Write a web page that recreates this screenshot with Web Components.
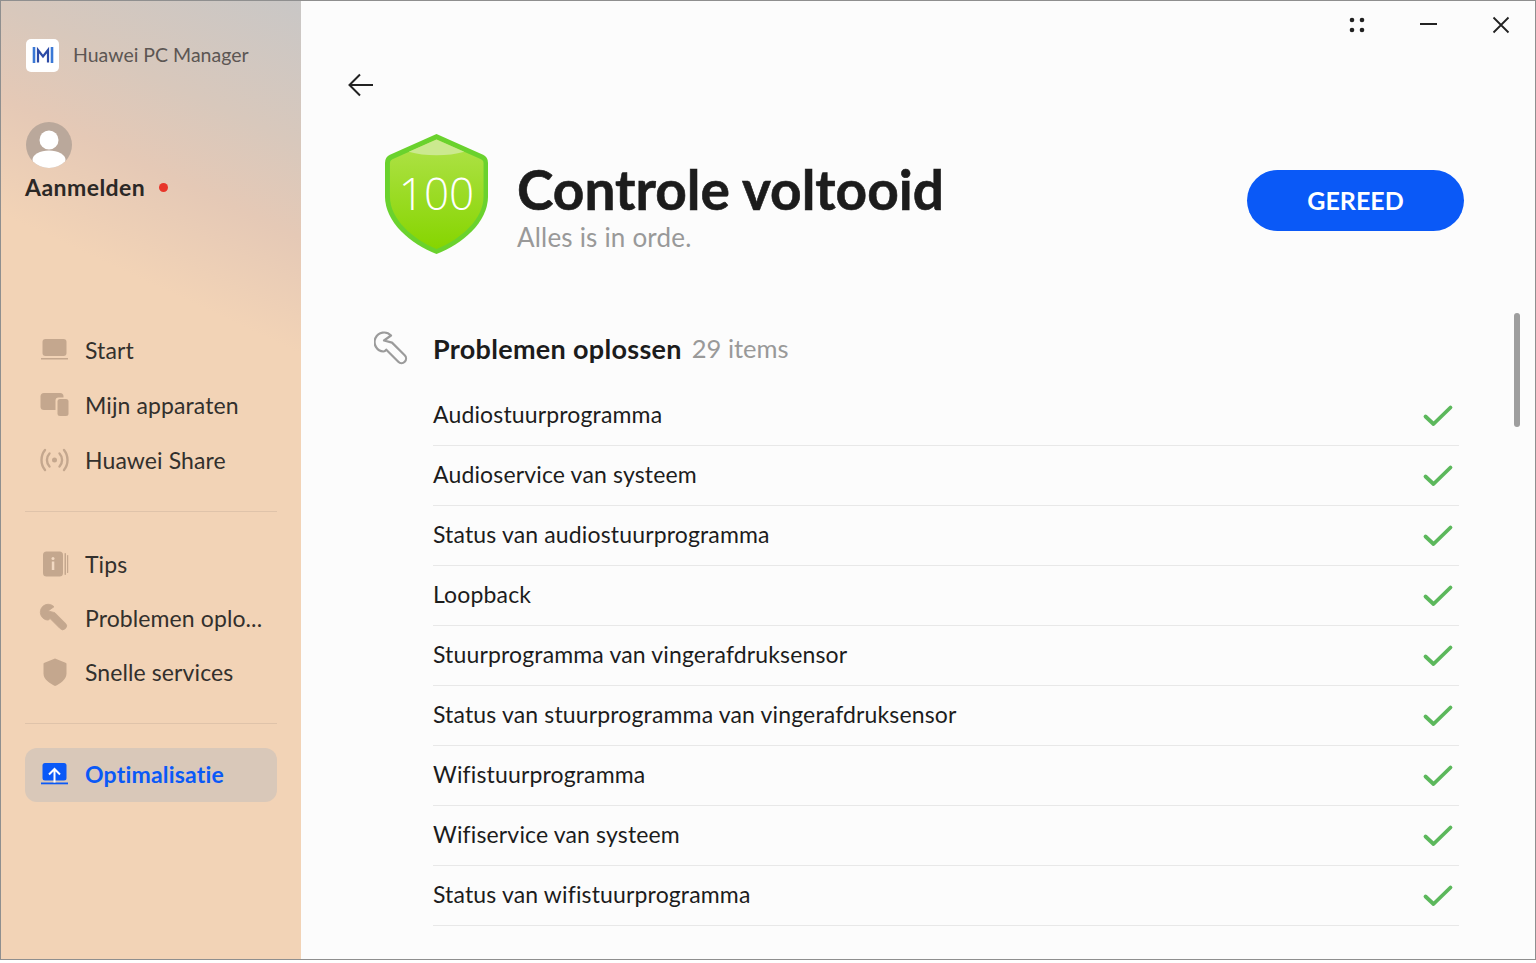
<!DOCTYPE html>
<html lang="nl">
<head>
<meta charset="utf-8">
<title>Huawei PC Manager</title>
<style>
html, body { margin: 0; padding: 0; background: #fff; }
body { font-family: Lato, "Noto Sans", sans-serif; height: 963px; overflow: hidden; }
</style>
</head>
<body>
<app-window></app-window>

<script>
const WRENCH = 'M17 4.500A9.500 9.500 0 1 0 9.500 20.500Q11 20.500 12.300 18.700L24.300 30.700A4.500 4.500 0 0 0 30.700 24.300L18 11.600 10 9.500z';

const ICONS = {
    start: `<svg width="30" height="26" viewBox="0 0 30 26"><rect x="3.500" y="2" width="24" height="17" rx="3" fill="#c4a78e"/><rect x="2" y="21" width="27" height="1.500" fill="#c4a78e"/></svg>`,
    devices: `<svg width="30" height="26" viewBox="0 0 30 26"><rect x="1.500" y="1" width="23" height="17" rx="3.500" fill="#c4a78e"/><rect x="16.500" y="5.500" width="13" height="19" rx="3" fill="#f2d3b5"/><rect x="18.500" y="7" width="11" height="17" rx="2.500" fill="#c4a78e"/></svg>`,
    share: `<svg width="30" height="26" viewBox="0 0 30 26" fill="none" stroke="#c4a78e" stroke-width="2.400" stroke-linecap="round"><circle cx="15.500" cy="13" r="2.500" fill="#c4a78e" stroke="none"/><path d="M10.500 6.500a9.500 9.500 0 0 0 0 13M20.500 6.500a9.500 9.500 0 0 1 0 13"/><path d="M6 3a16 16 0 0 0 0 20M25 3a16 16 0 0 1 0 20"/></svg>`,
    tips: `<svg width="30" height="28" viewBox="0 0 30 28"><rect x="4" y="1.500" width="20" height="25" rx="3.500" fill="#c4a78e"/><rect x="25.500" y="3" width="1.500" height="22" rx=".7" fill="#c4a78e"/><rect x="28" y="5" width="1.200" height="18" rx=".6" fill="#c4a78e"/><circle cx="14" cy="8.500" r="1.500" fill="#f2d9c2"/><rect x="12.800" y="11.500" width="2.500" height="8.500" fill="#f2d9c2"/></svg>`,
    wrench: `<svg width="30" height="30" viewBox="-1 0 36 36"><path d="${WRENCH}" fill="#c4a78e" stroke="#c4a78e" stroke-width="1" stroke-linejoin="round"/></svg>`,
    shield: `<svg width="30" height="30" viewBox="0 0 30 30"><path d="M16 1.500l10.500 4.200c.8.300 1 .8 1 1.600v9.200c0 6-6.500 10.500-11.500 12.500C11 26.500 4.500 22.500 4.500 16.500V7.300c0-.8.200-1.300 1-1.600z" fill="#c4a78e"/></svg>`,
    optimize: `<svg width="30" height="26" viewBox="0 0 30 26"><rect x="3.500" y="1" width="24" height="17.500" rx="2.500" fill="#0a59f7"/><rect x="2" y="20.500" width="27" height="1.800" fill="#0a59f7"/><path d="M15.500 20.500V7.500M10 12.500L15.500 7l5.500 5.500" fill="none" stroke="#fff" stroke-width="2"/></svg>`
};

class NavItem extends HTMLElement {
    constructor() {
        super();
        this.attachShadow({ mode: 'open' });
        this.shadowRoot.innerHTML = `
            <style>
                :host { display: flex; align-items: center; height: var(--h, 55px); border-radius: 12px; font-size: 23px; letter-spacing: .1px; color: #33302d; white-space: nowrap; }
                :host([active]) { background: #d9c8b9; color: #0a59f7; font-weight: 700; letter-spacing: .2px; }
                :host([active]) slot { display: block; padding-bottom: 2px; }
                .icon { width: 30px; height: 30px; margin: 0 16px 0 14px; display: flex; align-items: center; justify-content: center; flex: none; }
            </style>
            <span class="icon">${ICONS[this.getAttribute('icon')]}</span><slot></slot>
        `;
    }
}
customElements.define('nav-item', NavItem);

class SideBar extends HTMLElement {
    constructor() {
        super();
        this.attachShadow({ mode: 'open' });
        this.shadowRoot.innerHTML = `
            <style>
                :host {
                    display: flex; flex-direction: column; flex: none; width: 300px; box-sizing: border-box; padding: 37px 24px 0 24px;
                    background: linear-gradient(205deg, #c9c7c6 0, #d8c8bc 130px, #e5c9b6 215px, #f2d3b6 320px, #f2d3b6 100%);
                }
                .brand { display: flex; align-items: center; height: 34px; font-size: 19.500px; color: #5c5653; }
                .brand slot { display: block; padding-bottom: 2px; }
                .logo { width: 33px; height: 33px; border-radius: 5px; background: #fff; margin: 0 14px 0 1px; display: flex; align-items: center; justify-content: center; }
                .avatar { width: 46px; height: 46px; margin: 50px 0 0 1px; }
                .login { display: flex; align-items: center; height: 30px; margin-top: 4px; font-size: 23px; font-weight: 700; letter-spacing: .45px; color: #2b2826; }
                .dot { width: 9px; height: 9px; border-radius: 50%; background: #e8352a; margin-left: 14px; }
                .first { margin-top: 120px; }
                hr { border: 0; border-top: 1px solid #dfc3aa; margin: 0 0; height: 0; align-self: stretch; }
                .g1 { margin-bottom: 24px; }
                .g2 { --h: 54px; margin-bottom: 24px; }
                .g2 + hr { margin-bottom: 24px; }
                .g1 + hr { margin-bottom: 25px; }
                .last { --h: 54px; }
            </style>
            <div class="brand">
                <span class="logo">
                    <svg width="22" height="18" viewBox="0 0 22 18" fill="none">
                        <path d="M2 1v16" stroke="#3a78d6" stroke-width="2.600"/>
                        <path d="M6 16.500V4l5 6.500L16 4v12.500" stroke="#2c4aa6" stroke-width="2.200"/>
                        <path d="M20 1v16" stroke="#3a78d6" stroke-width="2.600"/>
                    </svg>
                </span>
                <slot name="title"></slot>
            </div>
            <svg class="avatar" viewBox="0 0 46 46">
                <defs><clipPath id="av"><circle cx="23" cy="23" r="23"/></clipPath></defs>
                <circle cx="23" cy="23" r="23" fill="#baa89b"/>
                <g clip-path="url(#av)" fill="#fff">
                    <circle cx="23" cy="18" r="9.500"/>
                    <ellipse cx="23" cy="38" rx="16.500" ry="9.500"/>
                </g>
            </svg>
            <div class="login"><slot name="login"></slot><span class="dot"></span></div>
            <div class="first g1"><slot name="main"></slot></div>
            <hr>
            <div class="g2"><slot name="more"></slot></div>
            <hr>
            <div class="last"><slot name="active"></slot></div>
        `;
    }
}
customElements.define('side-bar', SideBar);

class CheckRow extends HTMLElement {
    constructor() {
        super();
        this.attachShadow({ mode: 'open' });
        this.shadowRoot.innerHTML = `
            <style>
                :host { display: flex; align-items: center; justify-content: space-between; height: 60px; box-sizing: border-box; border-bottom: 1px solid #e8e8e8; font-size: 23px; letter-spacing: .15px; color: #1c1c1c; }
                slot { display: block; padding-bottom: 4px; }
                svg { margin-right: 5px; }
            </style>
            <slot></slot>
            <svg width="32" height="24" viewBox="0 0 32 24" fill="none" stroke="#5cb85c" stroke-width="3.800" stroke-linecap="round" stroke-linejoin="round"><path d="M3.500 12.500l8 7.500L28.500 3.500"/></svg>
        `;
    }
}
customElements.define('check-row', CheckRow);

class ScoreHeader extends HTMLElement {
    constructor() {
        super();
        this.attachShadow({ mode: 'open' });
        this.shadowRoot.innerHTML = `
            <style>
                :host { display: flex; align-items: flex-start; height: 122px; margin-left: 84px; margin-right: 71px; }
                .shield { position: relative; width: 103px; height: 122px; flex: none; margin-right: 29px; }
                .shield svg { display: block; }
                .score { position: absolute; left: 0; right: 0; top: 32px; text-align: center; font: 300 44px/56px "Open Sans", sans-serif; color: #fff; }
                .text { flex: 1; padding-top: 25px; }
                h1 { margin: 0; font-size: 55px; line-height: 62px; font-weight: 700; color: #1c1c1c; -webkit-text-stroke: .6px #1c1c1c; }
                p { margin: 0; font-size: 26px; line-height: 34px; letter-spacing: .2px; color: #999; }
                button { width: 217px; height: 61px; margin-top: 37px; border: none; border-radius: 31px; background: #0a59f7; color: #fff; font: 700 25px Lato, sans-serif; padding: 0 0 2px; }
            </style>
            <div class="shield">
                <svg width="103" height="121" viewBox="0 0 104 122" preserveAspectRatio="none">
                    <defs>
                        <linearGradient id="sg" x1="0" y1="0" x2="0" y2="1"><stop offset="0" stop-color="#b0e24a"/><stop offset="1" stop-color="#86d500"/></linearGradient>
                    </defs>
                    <path d="M52 1L99 22c3 1.500 5 4 5 8v34c0 26-26 48-52 58C26 112 0 90 0 64V30c0-4 2-6.500 5-8z" fill="#6ad22d"/>
                    <path d="M52 6.500L97 26.500c1.500.7 2.500 2 2.500 4V64c0 23-23 43-47.500 53C28 107 5 87 5 64V30.500c0-2 1-3.300 2.500-4z" fill="url(#sg)"/>
                    <path d="M52 6.500L80 19c-8 2.500-18 3.500-28 3.500S32 21.500 24 19z" fill="#cbe98f"/>
                </svg>
                <span class="score">100</span>
            </div>
            <div class="text"><h1>Controle voltooid</h1><p>Alles is in orde.</p></div>
            <button>GEREED</button>
        `;
    }
}
customElements.define('score-header', ScoreHeader);

class SectionHead extends HTMLElement {
    constructor() {
        super();
        this.attachShadow({ mode: 'open' });
        this.shadowRoot.innerHTML = `
            <style>
                :host { display: flex; align-items: center; height: 36px; font-size: 27px; color: #1c1c1c; }
                .icon { width: 60px; flex: none; display: flex; }
                .icon svg { margin-left: 1px; }
                b { font-weight: 700; letter-spacing: .3px; }
                span.n { color: #999; margin-left: 10px; font-size: 25.500px; }
            </style>
            <span class="icon">
                <svg width="34" height="34" viewBox="0 0 34 34" fill="none" stroke="#9b9b9b" stroke-width="2.200" stroke-linejoin="round"><path d="${WRENCH}"/></svg>
            </span>
            <b>Problemen oplossen</b><span class="n">29 items</span>
        `;
    }
}
customElements.define('section-head', SectionHead);

class AppWindow extends HTMLElement {
    constructor() {
        super();
        this.attachShadow({ mode: 'open' });
        this.shadowRoot.innerHTML = `
            <style>
                :host { display: flex; position: relative; width: 1536px; height: 960px; box-sizing: border-box; border: 1px solid #8f8f8f; overflow: hidden; background: #fcfcfc; }
                main { flex: 1; min-width: 0; display: flex; flex-direction: column; position: relative; }
                .controls { display: flex; justify-content: flex-end; align-items: center; height: 47px; padding-right: 24px; gap: 52px; }
                .back { display: block; margin: 22px 0 0 46px; height: 30px; }
                score-header { margin-top: 33px; }
                section-head { margin: 75px 0 0 72px; }
                .list { margin: 20px 76px 0 132px; }
                .thumb { position: absolute; top: 312px; right: 15px; width: 6px; height: 114px; border-radius: 3px; background: #9e9e9e; }
            </style>
            <side-bar>
                <span slot="title">Huawei PC Manager</span>
                <span slot="login">Aanmelden</span>
                <nav-item slot="main" icon="start">Start</nav-item>
                <nav-item slot="main" icon="devices">Mijn apparaten</nav-item>
                <nav-item slot="main" icon="share">Huawei Share</nav-item>
                <nav-item slot="more" icon="tips">Tips</nav-item>
                <nav-item slot="more" icon="wrench">Problemen oplo...</nav-item>
                <nav-item slot="more" icon="shield">Snelle services</nav-item>
                <nav-item slot="active" icon="optimize" active>Optimalisatie</nav-item>
            </side-bar>
            <main>
                <div class="controls">
                    <svg width="20" height="20" viewBox="0 0 20 20" fill="#222"><circle cx="5" cy="5" r="2.300"/><circle cx="15" cy="5" r="2.300"/><circle cx="5" cy="15" r="2.300"/><circle cx="15" cy="15" r="2.300"/></svg>
                    <svg width="20" height="20" viewBox="0 0 20 20" stroke="#222" stroke-width="2"><path d="M1 9h17"/></svg>
                    <svg width="20" height="20" viewBox="0 0 20 20" stroke="#222" stroke-width="1.800"><path d="M2.500 2.500l15 15M17.500 2.500l-15 15"/></svg>
                </div>
                <svg class="back" width="30" height="30" viewBox="0 0 30 30" fill="none" stroke="#222" stroke-width="2"><path d="M26 15H3M13 4.500L2.500 15 13 25.500"/></svg>
                <score-header></score-header>
                <section-head></section-head>
                <div class="list">
                    <check-row>Audiostuurprogramma</check-row>
                    <check-row>Audioservice van systeem</check-row>
                    <check-row>Status van audiostuurprogramma</check-row>
                    <check-row>Loopback</check-row>
                    <check-row>Stuurprogramma van vingerafdruksensor</check-row>
                    <check-row>Status van stuurprogramma van vingerafdruksensor</check-row>
                    <check-row>Wifistuurprogramma</check-row>
                    <check-row>Wifiservice van systeem</check-row>
                    <check-row>Status van wifistuurprogramma</check-row>
                </div>
                <div class="thumb"></div>
            </main>
        `;
    }
}
customElements.define('app-window', AppWindow);
</script>
</body>
</html>
